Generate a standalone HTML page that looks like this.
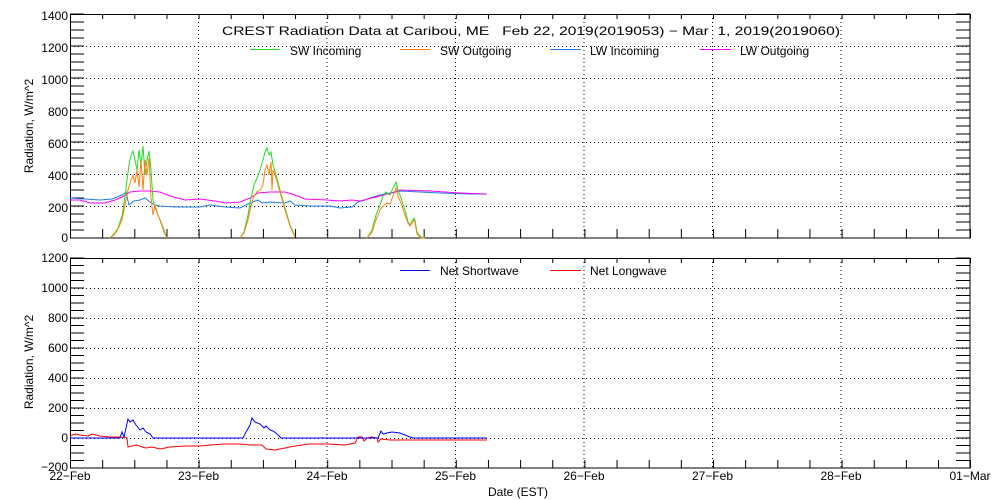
<!DOCTYPE html>
<html><head><meta charset="utf-8"><style>
html,body{margin:0;padding:0;background:#fff;}
svg{display:block;}
text{font-family:"Liberation Sans",sans-serif;font-size:12px;fill:#000;}
</style></head><body>
<svg width="1000" height="500" xmlns="http://www.w3.org/2000/svg">
<defs>
<pattern id="yt1" patternUnits="userSpaceOnUse" x="0" y="13.5" width="14" height="8"><rect x="0" y="0" width="14" height="1" fill="#000"/></pattern>
<pattern id="yt2" patternUnits="userSpaceOnUse" x="0" y="257.5" width="14" height="7.5"><rect x="0" y="0" width="14" height="1" fill="#000"/></pattern>
<pattern id="xt" patternUnits="userSpaceOnUse" x="70" y="0" width="32.15" height="10"><rect x="0" y="0" width="1" height="10" fill="#000"/></pattern>
</defs>
<rect width="1000" height="500" fill="#fff"/>
<g stroke="#000" stroke-dasharray="1,3" stroke-width="1" fill="none" shape-rendering="crispEdges">
<path d="M70 206.5H970M70 174.5H970M70 142.5H970M70 110.5H970M70 78.5H970M70 46.5H970"/>
<path d="M198.5 14V238M327 14V238M455.5 14V238M584 14V238M712.5 14V238M841 14V238"/>
<path d="M70 408.5H970M70 378.5H970M70 348.5H970M70 318.5H970M70 288.5H970M70 438.5H970"/>
<path d="M198.5 258V468M327 258V468M455.5 258V468M584 258V468M712.5 258V468M841 258V468"/>
</g>
<rect x="70" y="13.5" width="14" height="226" fill="url(#yt1)"/>
<rect x="956" y="13.5" width="14" height="226" fill="url(#yt1)"/>
<rect x="70" y="257.5" width="14" height="211" fill="url(#yt2)"/>
<rect x="956" y="257.5" width="14" height="211" fill="url(#yt2)"/>
<rect x="70" y="229" width="901" height="9" fill="url(#xt)"/>
<rect x="70" y="14" width="901" height="5" fill="url(#xt)"/>
<rect x="70" y="460" width="901" height="8" fill="url(#xt)"/>
<rect x="70" y="258" width="901" height="5" fill="url(#xt)"/>
<rect x="70.5" y="14.5" width="899.5" height="223.5" fill="none" stroke="#000" shape-rendering="crispEdges"/>
<rect x="70.5" y="258.5" width="899.5" height="209.5" fill="none" stroke="#000" shape-rendering="crispEdges"/>
<g fill="none" stroke-width="1">
<polyline stroke="#1e7fe6" points="70,198 85,199 100,200 112,199 122,195 126,192 129,205 134,201 140,200 145,198 150,202 155,205 160,206 175,207 200,207 210,205 225,207 240,208 250,203 258,200 262,203 270,202 285,203 290,201 295,205 310,206 330,206 340,208 352,207 358,202 365,200 370,198 380,195 390,193 400,191 440,193 470,194 487,194"/>
<polyline stroke="#ff00ff" points="70,200 80,200 90,203 105,203 115,200 122,197 130,192 140,191 150,191 160,192 170,196 185,200 200,199 215,201 225,203 240,202 250,198 258,193 270,192 285,192 295,195 305,199 327,200 340,201 352,200 360,201 368,199 380,196 395,192 400,190 430,191 460,193 487,194"/>
<polyline stroke="#22dd22" points="110,238 114,234 118,228 122,216 125,197 127,180 129,165 131,155 133,151 135,160 137,170 139,150 141,165 143,146 145,175 147,160 149,151 151,170 153,200 156,210 160,220 164,232 167,238"/>
<polyline stroke="#22dd22" points="240,238 244,232 248,215 251,198 254,185 257,178 260,170 263,160 265,152 267,148 269,155 271,152 273,165 276,175 280,190 285,208 290,225 295,236"/>
<polyline stroke="#22dd22" points="367,238 372,230 376,215 380,205 383,196 386,192 390,195 393,188 396,182 398,190 401,198 405,210 408,222 410,225 414,218 415,220 417,232 421,237 425,238"/>
<polyline stroke="#ff7f0e" points="110,238 114,235 118,229 122,220 125,205 128,190 131,180 133,175 135,183 137,170 139,187 141,160 143,190 145,160 147,175 149,158 151,198 153,215 155,205 158,215 161,222 164,230 167,238"/>
<polyline stroke="#ff7f0e" points="240,238 244,233 248,220 251,206 254,196 257,192 260,190 263,185 265,170 267,165 269,175 271,162 272,190 273,170 276,178 280,192 285,210 290,226 295,237"/>
<polyline stroke="#ff7f0e" points="367,238 372,232 376,220 380,210 383,206 387,203 390,204 393,196 396,188 398,196 401,203 405,215 408,223 410,226 414,220 415,222 417,234 421,238 425,238"/>
</g>
<g fill="none" stroke-width="1">
<polyline stroke="#ff0000" points="70,436 75,434 80,435 88,436 92,434 96,435 100,436 110,437 120,437 127,438 128,447 132,446 137,445 142,447 146,448 152,447 160,449 170,447 185,446 200,446 210,445 225,444 240,444 250,445 262,445 266,449 275,450 285,448 295,446 310,444 327,444 345,445 355,443 358,437 362,437 364,441 367,438 372,437 377,438 378,442 381,439 390,440 410,440 440,440 487,440"/>
<polyline stroke="#0000ff" points="70,438 120,438 122,432 124,437 126,428 128,419 130,422 133,420 136,425 140,430 143,428 146,432 150,434 153,438 243,438 246,432 250,425 252,418 255,422 260,424 264,428 266,426 270,430 273,431 277,434 281,438 378,438 381,431 383,434 387,433 392,432 400,433 405,435 410,437 413,438 440,438 487,438"/>
</g>
<line x1="250" y1="49.5" x2="280" y2="49.5" stroke="#22dd22"/>
<line x1="400" y1="49.5" x2="430" y2="49.5" stroke="#ff7f0e"/>
<line x1="550" y1="49.5" x2="581" y2="49.5" stroke="#1e7fe6"/>
<line x1="700" y1="49.5" x2="731" y2="49.5" stroke="#ff00ff"/>
<text x="290" y="55">SW Incoming</text>
<text x="440" y="55">SW Outgoing</text>
<text x="590" y="55">LW Incoming</text>
<text x="740" y="55">LW Outgoing</text>
<line x1="400" y1="270.5" x2="430" y2="270.5" stroke="#0000ff"/>
<line x1="550" y1="270.5" x2="581" y2="270.5" stroke="#ff0000"/>
<text x="440" y="275">Net Shortwave</text>
<text x="590" y="275">Net Longwave</text>
<text x="222" y="35" font-size="13" textLength="618" lengthAdjust="spacingAndGlyphs" style="white-space:pre">CREST Radiation Data at Caribou, ME   Feb 22, 2019(2019053) − Mar  1, 2019(2019060)</text>
<g text-anchor="end">
<text x="68" y="20">1400</text><text x="68" y="52">1200</text><text x="68" y="84">1000</text><text x="68" y="116">800</text><text x="68" y="148">600</text><text x="68" y="180">400</text><text x="68" y="212">200</text><text x="68" y="242">0</text>
<text x="68" y="262">1200</text><text x="68" y="292">1000</text><text x="68" y="322">800</text><text x="68" y="352">600</text><text x="68" y="382">400</text><text x="68" y="412">200</text><text x="68" y="442">0</text><text x="68" y="471">−200</text>
</g>
<text transform="translate(33,126) rotate(-90)" text-anchor="middle">Radiation, W/m^2</text>
<text transform="translate(33,362) rotate(-90)" text-anchor="middle">Radiation, W/m^2</text>
<g text-anchor="middle">
<text x="70" y="480">22−Feb</text><text x="198.5" y="480">23−Feb</text><text x="327" y="480">24−Feb</text><text x="455.5" y="480">25−Feb</text><text x="584" y="480">26−Feb</text><text x="712.5" y="480">27−Feb</text><text x="841" y="480">28−Feb</text><text x="970" y="480">01−Mar</text>
<text x="518" y="496">Date (EST)</text>
</g>
</svg>
</body></html>
